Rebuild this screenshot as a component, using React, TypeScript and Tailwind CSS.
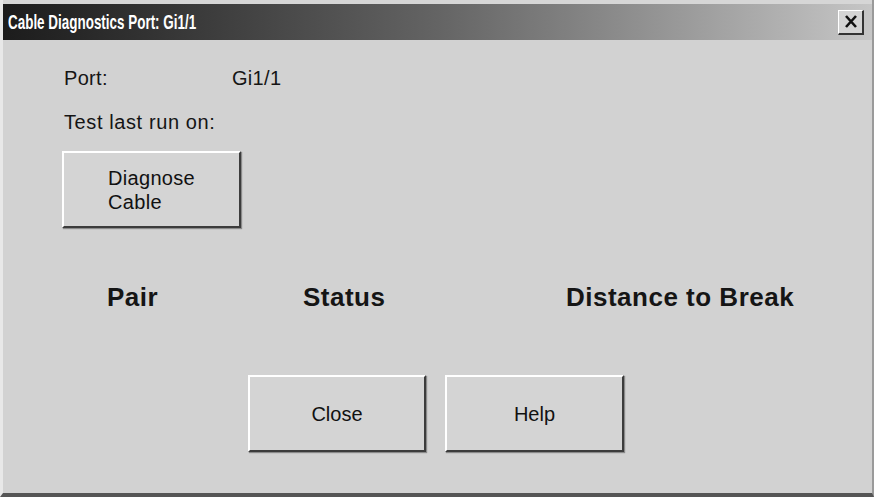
import React from "react";

const btn =
  "box-border bg-[#d4d4d4] border-t-2 border-l-2 border-t-white border-l-white border-b-2 border-r-2 border-b-[#3c3c3c] border-r-[#3c3c3c] shadow-[1px_1px_1px_#8a8a8a] text-[#111] text-[20px] leading-[24px]";

export default function App() {
  return (
    <div
      className="w-[874px] h-[497px] bg-[#cfcfcf] flex flex-col overflow-hidden border-l-[3px] border-l-[#e8e8e8] border-b-[4px] border-b-[#555] border-r-[2px] border-r-[#9a9a9a]"
      style={{ fontFamily: '"Liberation Sans", Arial, sans-serif' }}
    >
      <div className="h-[4px] bg-[#d6d6d6]" />
      <div className="h-[36px] flex items-center justify-between pl-[5px] pr-[8px] bg-linear-to-r from-[#1c1c1c] via-[#646464] to-[#c6c6c6]">
        <span className="inline-block origin-left scale-x-[0.64] text-white font-bold text-[21px] whitespace-nowrap">
          Cable Diagnostics Port: Gi1/1
        </span>
        <div className="w-[26px] h-[25px] flex items-center justify-center bg-[#d4d4d4] border-t border-l border-white border-b-2 border-r-2 border-b-[#333] border-r-[#333]">
          <svg width="14" height="13" viewBox="0 0 14 13">
            <path d="M2 1 L12 12 M12 1 L2 12" stroke="#111" strokeWidth="2.6" fill="none" />
          </svg>
        </div>
      </div>

      <div className="flex-1 flex flex-col bg-[#d2d2d2] text-[#151515]">
        <div className="flex pl-[61px] mt-[26px] text-[20px] leading-[24px] tracking-[0.3px]">
          <span className="w-[168px]">Port:</span>
          <span>Gi1/1</span>
        </div>
        <div className="pl-[61px] mt-[20px] text-[20px] leading-[24px] tracking-[0.6px]">
          Test last run on:
        </div>
        <div className="pl-[59px] mt-[17px]">
          <div className={`${btn} w-[179px] h-[77px] flex items-center justify-center`}>
            <div className="text-left tracking-[0.3px]">
              <div>Diagnose</div>
              <div>Cable</div>
            </div>
          </div>
        </div>
        <div className="grid grid-cols-[196px_263px_1fr] pl-[104px] mt-[54px] text-[26px] leading-[30px] font-bold tracking-[0.5px]">
          <span>Pair</span>
          <span>Status</span>
          <span>Distance to Break</span>
        </div>
        <div className="flex gap-[19px] pl-[245px] mt-[63px]">
          <div className={`${btn} w-[178px] h-[77px] flex items-center justify-center`}>Close</div>
          <div className={`${btn} w-[179px] h-[77px] flex items-center justify-center`}>Help</div>
        </div>
      </div>
    </div>
  );
}
